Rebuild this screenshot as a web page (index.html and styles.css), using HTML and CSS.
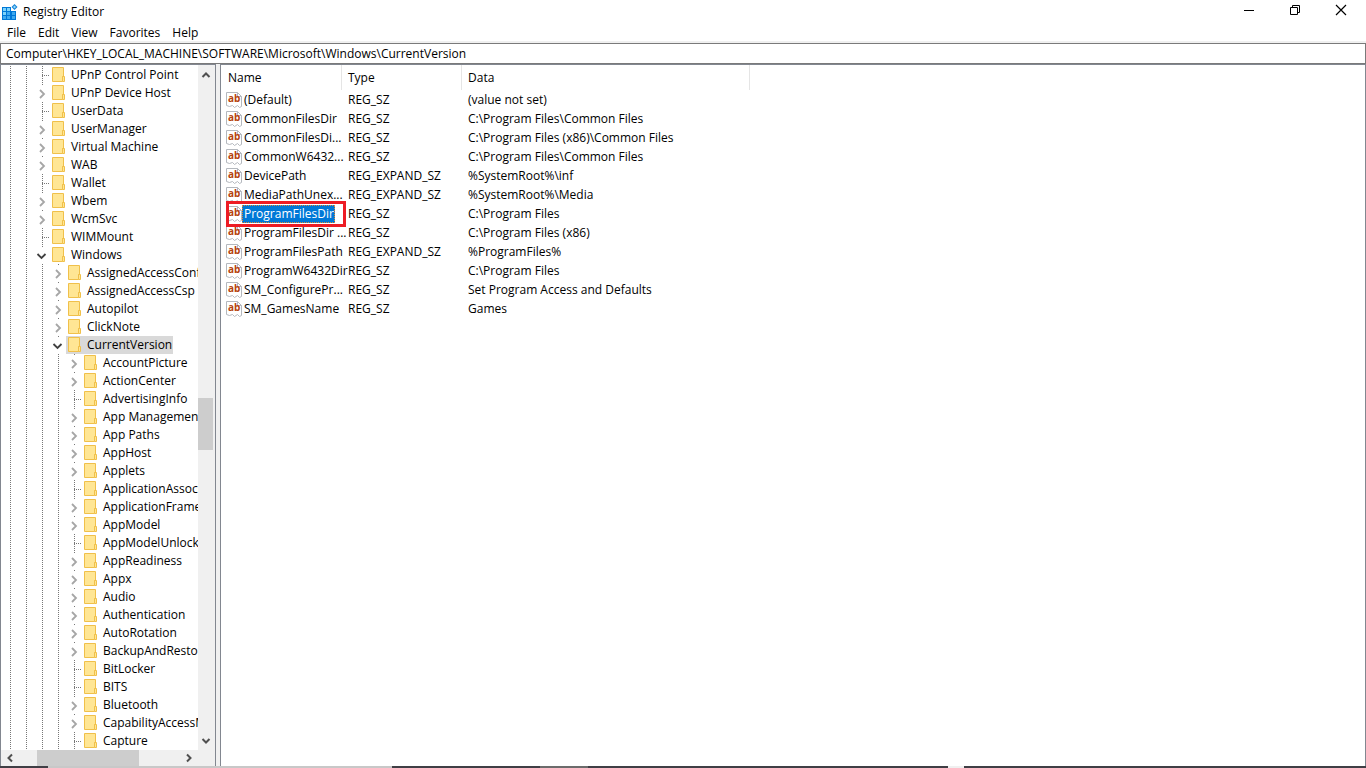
FILE: index.html
```html
<!DOCTYPE html>
<html lang="en">
<head>
<meta charset="utf-8">
<title>Registry Editor</title>
<link rel="stylesheet" href="styles.css">
</head>
<body>
<svg class="symbols" aria-hidden="true">
  <symbol id="folder" viewBox="0 0 16 18"><path d="M2.500 1.500h11v9h-1v5h-10z" fill="#ffe694" stroke="#f0c04a"/><path d="M12.500 10.500h2v5h-2z" fill="#ffe694" stroke="#f0c04a"/></symbol>
  <symbol id="right" viewBox="0 0 16 16"><path d="M6 4l4 4-4 4" fill="none" stroke="#a6a6a6" stroke-width="1.8"/></symbol>
  <symbol id="open" viewBox="0 0 16 16"><path d="M3.500 6l4 4 4-4" fill="none" stroke="#404040" stroke-width="1.8"/></symbol>
  <symbol id="string" viewBox="0 0 16 16"><path d="M.5 .5h11l4 4v10l-2 1-2-2-3 2-2-2-3 1-3-1z" fill="#fff" stroke="#b4b8be"/><path d="M11.5 .5v4h4" fill="none" stroke="#b4b8be"/><text x="2" y="10" class="glyph">ab</text></symbol>
</svg>
<div class="window">
  <header class="titlebar">
    <svg class="logo" viewBox="0 0 16 16" aria-hidden="true"><path d="M0 3h9v4h5v9H0z" fill="#0078d7"/><path d="M1 4h3v3H1zM5 4h3v3H5zM1 8h3v3H1zM5 8h3v3H5zM10 8h3v3h-3zM1 12h3v3H1zM5 12h3v3H5zM10 12h3v3h-3z" fill="#3fa9ee"/><path d="M1 4h3v3H1zM1 8h3v3H1zM5 4h3v3H5z" fill="#7dd3fa"/><path d="M12.500 0l3 3-3 3-3-3z" fill="#1683d8"/><path d="M12.500 1.500l1.500 1.500-1.500 1.500L11 3z" fill="#8fd8fa"/></svg>
    <h1>Registry Editor</h1>
    <div class="controls">
      <button aria-label="Minimize"><svg viewBox="0 0 12 12"><path d="M1 6.500h10" stroke="#000"/></svg></button>
      <button aria-label="Restore"><svg viewBox="0 0 12 12"><path d="M1.500 3.500h7v7h-7zM3.500 3.500v-2h7v7h-2" fill="none" stroke="#000"/></svg></button>
      <button aria-label="Close"><svg viewBox="0 0 12 12"><path d="M1 1l10 10M11 1L1 11" stroke="#000" stroke-width="1.200"/></svg></button>
    </div>
  </header>
  <nav class="menu"><button>File</button><button>Edit</button><button>View</button><button>Favorites</button><button>Help</button></nav>
  <input class="address" type="text" aria-label="Address" value="Computer\HKEY_LOCAL_MACHINE\SOFTWARE\Microsoft\Windows\CurrentVersion">
  <main class="panes">
    <section class="tree" aria-label="Keys">
      <div class="keys">
        <ul class="branch"><li><ul class="branch">
          <li><div class="key"><i class="leaf"></i><svg><use href="#folder"/></svg><span>UPnP Control Point</span></div></li>
          <li><div class="key"><button aria-label="Expand"><svg><use href="#right"/></svg></button><svg><use href="#folder"/></svg><span>UPnP Device Host</span></div></li>
          <li><div class="key"><i class="leaf"></i><svg><use href="#folder"/></svg><span>UserData</span></div></li>
          <li><div class="key"><button aria-label="Expand"><svg><use href="#right"/></svg></button><svg><use href="#folder"/></svg><span>UserManager</span></div></li>
          <li><div class="key"><button aria-label="Expand"><svg><use href="#right"/></svg></button><svg><use href="#folder"/></svg><span>Virtual Machine</span></div></li>
          <li><div class="key"><button aria-label="Expand"><svg><use href="#right"/></svg></button><svg><use href="#folder"/></svg><span>WAB</span></div></li>
          <li><div class="key"><i class="leaf"></i><svg><use href="#folder"/></svg><span>Wallet</span></div></li>
          <li><div class="key"><button aria-label="Expand"><svg><use href="#right"/></svg></button><svg><use href="#folder"/></svg><span>Wbem</span></div></li>
          <li><div class="key"><button aria-label="Expand"><svg><use href="#right"/></svg></button><svg><use href="#folder"/></svg><span>WcmSvc</span></div></li>
          <li><div class="key"><i class="leaf"></i><svg><use href="#folder"/></svg><span>WIMMount</span></div></li>
          <li><div class="key"><button aria-label="Collapse"><svg><use href="#open"/></svg></button><svg><use href="#folder"/></svg><span>Windows</span></div>
            <ul class="branch">
              <li><div class="key"><button aria-label="Expand"><svg><use href="#right"/></svg></button><svg><use href="#folder"/></svg><span>AssignedAccessConf</span></div></li>
              <li><div class="key"><button aria-label="Expand"><svg><use href="#right"/></svg></button><svg><use href="#folder"/></svg><span>AssignedAccessCsp</span></div></li>
              <li><div class="key"><button aria-label="Expand"><svg><use href="#right"/></svg></button><svg><use href="#folder"/></svg><span>Autopilot</span></div></li>
              <li><div class="key"><button aria-label="Expand"><svg><use href="#right"/></svg></button><svg><use href="#folder"/></svg><span>ClickNote</span></div></li>
              <li><div class="key current"><button aria-label="Collapse"><svg><use href="#open"/></svg></button><svg><use href="#folder"/></svg><span>CurrentVersion</span></div>
                <ul class="branch">
                  <li><div class="key"><button aria-label="Expand"><svg><use href="#right"/></svg></button><svg><use href="#folder"/></svg><span>AccountPicture</span></div></li>
                  <li><div class="key"><button aria-label="Expand"><svg><use href="#right"/></svg></button><svg><use href="#folder"/></svg><span>ActionCenter</span></div></li>
                  <li><div class="key"><i class="leaf"></i><svg><use href="#folder"/></svg><span>AdvertisingInfo</span></div></li>
                  <li><div class="key"><button aria-label="Expand"><svg><use href="#right"/></svg></button><svg><use href="#folder"/></svg><span>App Management</span></div></li>
                  <li><div class="key"><button aria-label="Expand"><svg><use href="#right"/></svg></button><svg><use href="#folder"/></svg><span>App Paths</span></div></li>
                  <li><div class="key"><button aria-label="Expand"><svg><use href="#right"/></svg></button><svg><use href="#folder"/></svg><span>AppHost</span></div></li>
                  <li><div class="key"><button aria-label="Expand"><svg><use href="#right"/></svg></button><svg><use href="#folder"/></svg><span>Applets</span></div></li>
                  <li><div class="key"><i class="leaf"></i><svg><use href="#folder"/></svg><span>ApplicationAssoci</span></div></li>
                  <li><div class="key"><button aria-label="Expand"><svg><use href="#right"/></svg></button><svg><use href="#folder"/></svg><span>ApplicationFrame</span></div></li>
                  <li><div class="key"><button aria-label="Expand"><svg><use href="#right"/></svg></button><svg><use href="#folder"/></svg><span>AppModel</span></div></li>
                  <li><div class="key"><i class="leaf"></i><svg><use href="#folder"/></svg><span>AppModelUnlock</span></div></li>
                  <li><div class="key"><button aria-label="Expand"><svg><use href="#right"/></svg></button><svg><use href="#folder"/></svg><span>AppReadiness</span></div></li>
                  <li><div class="key"><button aria-label="Expand"><svg><use href="#right"/></svg></button><svg><use href="#folder"/></svg><span>Appx</span></div></li>
                  <li><div class="key"><button aria-label="Expand"><svg><use href="#right"/></svg></button><svg><use href="#folder"/></svg><span>Audio</span></div></li>
                  <li><div class="key"><button aria-label="Expand"><svg><use href="#right"/></svg></button><svg><use href="#folder"/></svg><span>Authentication</span></div></li>
                  <li><div class="key"><button aria-label="Expand"><svg><use href="#right"/></svg></button><svg><use href="#folder"/></svg><span>AutoRotation</span></div></li>
                  <li><div class="key"><button aria-label="Expand"><svg><use href="#right"/></svg></button><svg><use href="#folder"/></svg><span>BackupAndRestor</span></div></li>
                  <li><div class="key"><i class="leaf"></i><svg><use href="#folder"/></svg><span>BitLocker</span></div></li>
                  <li><div class="key"><i class="leaf"></i><svg><use href="#folder"/></svg><span>BITS</span></div></li>
                  <li><div class="key"><button aria-label="Expand"><svg><use href="#right"/></svg></button><svg><use href="#folder"/></svg><span>Bluetooth</span></div></li>
                  <li><div class="key"><button aria-label="Expand"><svg><use href="#right"/></svg></button><svg><use href="#folder"/></svg><span>CapabilityAccessM</span></div></li>
                  <li><div class="key"><i class="leaf"></i><svg><use href="#folder"/></svg><span>Capture</span></div></li>
                </ul>
              </li>
            </ul>
          </li>
        </ul></li></ul>
      </div>
      <div class="vscroll">
        <button aria-label="Scroll up"><svg viewBox="0 0 16 16"><path d="M4.500 12L8 8.500l3.500 3.500"/></svg></button>
        <div class="track"><div class="thumb"></div></div>
        <button aria-label="Scroll down"><svg viewBox="0 0 16 16"><path d="M4.500 5L8 8.500 11.500 5"/></svg></button>
      </div>
      <div class="hscroll">
        <button aria-label="Scroll left"><svg viewBox="0 0 16 16"><path d="M11 4.500L7.500 8l3.500 3.500"/></svg></button>
        <div class="track"><div class="thumb"></div></div>
        <button aria-label="Scroll right"><svg viewBox="0 0 16 16"><path d="M5 4.500L8.500 8 5 11.500"/></svg></button>
      </div>
    </section>
    <section class="values" aria-label="Values">
      <table>
        <colgroup><col class="name"><col class="type"><col class="data"></colgroup>
        <thead><tr><th>Name</th><th>Type</th><th>Data</th></tr></thead>
        <tbody>
          <tr><td><div class="value"><svg><use href="#string"/></svg><span>(Default)</span></div></td><td>REG_SZ</td><td>(value not set)</td></tr>
          <tr><td><div class="value"><svg><use href="#string"/></svg><span>CommonFilesDir</span></div></td><td>REG_SZ</td><td>C:\Program Files\Common Files</td></tr>
          <tr><td><div class="value"><svg><use href="#string"/></svg><span>CommonFilesDi...</span></div></td><td>REG_SZ</td><td>C:\Program Files (x86)\Common Files</td></tr>
          <tr><td><div class="value"><svg><use href="#string"/></svg><span>CommonW6432...</span></div></td><td>REG_SZ</td><td>C:\Program Files\Common Files</td></tr>
          <tr><td><div class="value"><svg><use href="#string"/></svg><span>DevicePath</span></div></td><td>REG_EXPAND_SZ</td><td>%SystemRoot%\inf</td></tr>
          <tr><td><div class="value"><svg><use href="#string"/></svg><span>MediaPathUnex...</span></div></td><td>REG_EXPAND_SZ</td><td>%SystemRoot%\Media</td></tr>
          <tr class="selected"><td><div class="value"><svg><use href="#string"/></svg><span>ProgramFilesDir</span></div></td><td>REG_SZ</td><td>C:\Program Files</td></tr>
          <tr><td><div class="value"><svg><use href="#string"/></svg><span>ProgramFilesDir ...</span></div></td><td>REG_SZ</td><td>C:\Program Files (x86)</td></tr>
          <tr><td><div class="value"><svg><use href="#string"/></svg><span>ProgramFilesPath</span></div></td><td>REG_EXPAND_SZ</td><td>%ProgramFiles%</td></tr>
          <tr><td><div class="value"><svg><use href="#string"/></svg><span>ProgramW6432Dir</span></div></td><td>REG_SZ</td><td>C:\Program Files</td></tr>
          <tr><td><div class="value"><svg><use href="#string"/></svg><span>SM_ConfigurePr...</span></div></td><td>REG_SZ</td><td>Set Program Access and Defaults</td></tr>
          <tr><td><div class="value"><svg><use href="#string"/></svg><span>SM_GamesName</span></div></td><td>REG_SZ</td><td>Games</td></tr>
        </tbody>
      </table>
    </section>
  </main>
  <footer class="taskbar"><i class="a"></i><i class="b"></i><i class="c"></i><i class="d"></i><i class="e"></i><i class="f"></i></footer>
</div>
</body>
</html>
```
FILE: styles.css
```css
* { box-sizing: border-box; }
body { margin: 0; background: #fff; color: #000; font: 12px/18px "Open Sans", "Noto Sans", sans-serif; }
button { margin: 0; padding: 0; border: 0; background: none; color: inherit; font: inherit; }
ul { margin: 0; padding: 0; list-style: none; }
svg { display: block; flex: none; }
.symbols { position: absolute; width: 0; height: 0; }
.glyph { font: bold 10px "Open Sans", sans-serif; fill: #b5420c; }
.window { display: flex; flex-direction: column; height: 100vh; overflow: hidden; }

.titlebar { display: flex; align-items: center; height: 24px; padding-left: 2px; }
.logo { width: 16px; height: 16px; }
.titlebar h1 { flex: 1; margin: 0 0 0 5px; font-size: 12px; font-weight: 400; }
.controls { display: flex; align-self: flex-start; }
.controls button { display: flex; align-items: center; justify-content: center; width: 46px; height: 20px; }
.controls button:last-child { margin-right: 2px; }
.controls svg { width: 12px; height: 12px; }
.menu { display: flex; gap: 12px; height: 19px; padding-left: 7px; border-bottom: 2px solid #f0f0f0; }
.address { width: 100%; height: 21px; padding: 0 5px; border: 1px solid #7a7a7a; outline: 0; background: #fff; color: #000; font: inherit; }

.panes { display: flex; flex: 1; min-height: 0; background: #f0f0f0; }
.tree { display: grid; grid-template: minmax(0, 1fr) 16px / minmax(0, 1fr) 16px; flex: none; width: 216px; margin-right: 4px; padding-right: 1px; border: 1px solid #828790; border-bottom: 0; }
.keys { overflow: hidden; padding: 1px 0 0 1px; background: #fff; }
.branch { padding-left: 16px; background: repeating-linear-gradient(#777 0 1px, transparent 1px 2px) 8px 0 / 1px 100% no-repeat; }
.key { display: flex; height: 18px; white-space: nowrap; }
.key svg { width: 16px; height: 18px; }
.key button, .leaf { flex: none; width: 16px; height: 18px; background: repeating-linear-gradient(#777 0 1px, transparent 1px 2px) 8px 0 / 1px 100% no-repeat; }
.leaf { background: repeating-linear-gradient(#777 0 1px, transparent 1px 2px) 8px 0 / 1px 100% no-repeat, repeating-linear-gradient(90deg, #777 0 1px, transparent 1px 2px) 8px 9px / 7px 1px no-repeat; }
.key button svg { width: 16px; height: 16px; margin-top: 2px; background: #fff; }
.key span { padding: 0 1px 0 5px; }
.current > svg, .current span { background: #d9d9d9; }

.vscroll { display: flex; flex-direction: column; background: #f0f0f0; }
.hscroll { display: flex; grid-column: 1 / 3; padding-right: 16px; background: #f0f0f0; }
.vscroll button, .hscroll button { width: 16px; height: 16px; }
.vscroll path, .hscroll path { fill: none; stroke: #505050; stroke-width: 2; }
.track { flex: 1; }
.vscroll .thumb { height: 8%; margin: 317px 1px 0 0; background: #cdcdcd; }
.hscroll .thumb { width: 102px; height: 16px; margin-left: 20px; background: #cdcdcd; }

.values { flex: 1; min-width: 0; overflow: hidden; border: 1px solid #828790; border-bottom: 0; background: #fff; }
table { border-collapse: separate; border-spacing: 0; table-layout: fixed; width: 529px; }
.name { width: 121px; }
.type { width: 120px; }
.data { width: 288px; }
th, td { padding: 0 0 0 6px; text-align: left; font-weight: 400; white-space: nowrap; }
th { height: 25px; border-right: 1px solid #e5e5e5; }
th:first-child { padding-left: 7px; }
td { height: 19px; }
td:first-child { padding-left: 5px; }
.value { display: flex; position: relative; align-items: center; height: 19px; }
.value svg { width: 16px; height: 16px; }
.value span { padding-left: 2px; }
.selected span { padding-right: 1px; outline: 1px dotted #e08a35; outline-offset: -1px; background: #0078d7; color: #fff; }
.selected .value::after { content: ""; position: absolute; z-index: 1; inset: -3px -4px -4px 0; border: 3px solid #ed1c24; }

.taskbar { display: flex; height: 2px; background: #403f45; }
.taskbar .a { width: 48px; }
.taskbar .b { width: 344px; background: #c8c8c8; }
.taskbar .c { width: 148px; }
.taskbar .d { width: 48px; background: #6c6c6c; }
.taskbar .e { width: 360px; }
.taskbar .f { width: 16px; background: #f0f0f0; }
```
